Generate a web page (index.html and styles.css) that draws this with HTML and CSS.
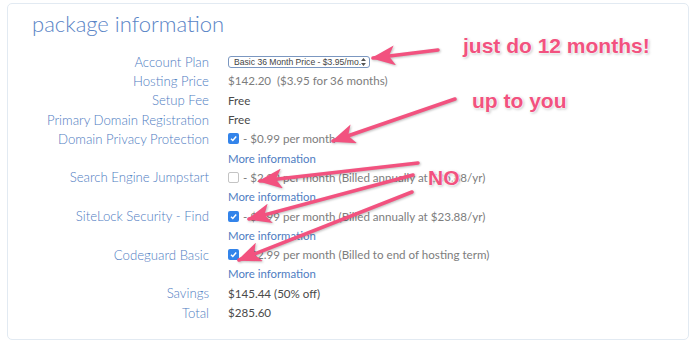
FILE: index.html
```html
<!DOCTYPE html>
<html lang="en">
<head>
    <meta charset="UTF-8">
    <meta name="viewport" content="width=device-width, initial-scale=1.0">
    <title>package information</title>
    <link rel="stylesheet" href="styles.css">
</head>
<body>

    <div class="card">
        <h1 class="title">package information</h1>

        <div class="details">
            <div class="label">Account Plan</div>
            <div class="value">
                <div class="plan-select">
                    <span>Basic 36 Month Price - $3.95/mo.</span>
                    <svg width="5" height="8" viewBox="0 0 5 8"><path d="M2.5 0 L5 3 L0 3 Z M2.5 8 L5 5 L0 5 Z" fill="#555"/></svg>
                </div>
            </div>

            <div class="label">Hosting Price</div>
            <div class="value">$142.20&nbsp; ($3.95 for 36 months)</div>

            <div class="label">Setup Fee</div>
            <div class="value strong">Free</div>

            <div class="label">Primary Domain Registration</div>
            <div class="value strong">Free</div>

            <!-- Add-ons -->
            <div class="label">Domain Privacy Protection</div>
            <div class="value"><span class="checkbox checked"></span> - $0.99 per month</div>
            <div></div>
            <div class="value link">More information</div>

            <div class="label">Search Engine Jumpstart</div>
            <div class="value"><span class="checkbox"></span> - $2.99 per month (Billed annually at $35.88/yr)</div>
            <div></div>
            <div class="value link">More information</div>

            <div class="label">SiteLock Security - Find</div>
            <div class="value"><span class="checkbox checked"></span> - $1.99 per month (Billed annually at $23.88/yr)</div>
            <div></div>
            <div class="value link">More information</div>

            <div class="label">Codeguard Basic</div>
            <div class="value"><span class="checkbox checked"></span> - $2.99 per month (Billed to end of hosting term)</div>
            <div></div>
            <div class="value link">More information</div>

            <div class="label">Savings</div>
            <div class="value strong">$145.44 (50% off)</div>

            <div class="label">Total</div>
            <div class="value strong">$285.60</div>
        </div>
    </div>

    <!-- Skitch style notes on top of the screenshot -->
    <svg class="arrows" width="700" height="350" viewBox="0 0 700 350">
        <defs>
            <marker id="head" markerUnits="userSpaceOnUse" markerWidth="24" markerHeight="20" viewBox="0 0 24 20" refX="22" refY="10" orient="auto">
                <path d="M0 0 L24 10 L0 20 L6 10 Z" fill="#f2527f"/>
            </marker>
        </defs>
        <g stroke="#f2527f" stroke-width="3.5" stroke-linecap="round" marker-end="url(#head)">
            <line x1="438" y1="50" x2="373" y2="58"/>
            <line x1="455" y1="99" x2="333" y2="141"/>
            <line x1="418" y1="163" x2="260" y2="181"/>
            <line x1="413" y1="175" x2="249" y2="219"/>
            <line x1="412" y1="192" x2="239" y2="260"/>
        </g>
    </svg>

    <div class="note note-months">just do 12 months!</div>
    <div class="note note-you">up to you</div>
    <div class="note note-no">NO</div>

</body>
</html>
```

FILE: styles.css
```css
body {
    margin: 0;
    padding: 0;
    background: #fff;
    position: relative;
    width: 700px;
    height: 350px;
    overflow: hidden;
    font-family: Lato, "Open Sans", sans-serif;
}

.card {
    box-sizing: border-box;
    margin: 3px 0 0 7px;
    width: 682px;
    height: 337px;
    border: 1px solid #e2eaf2;
    border-radius: 5px;
    padding: 7px 24px;
}

.title {
    margin: 0;
    font-size: 22px;
    line-height: 26px;
    font-weight: 300;
    color: #5a84c6;
}

.details {
    margin-top: 15px;
    display: grid;
    grid-template-columns: 177px 1fr;
    grid-auto-rows: 19.3px;
    column-gap: 19px;
    align-items: center;
}

.label {
    text-align: right;
    font-size: 13.2px;
    font-weight: 300;
    color: #4f7dc2;
    white-space: nowrap;
}

.value {
    font-size: 11.6px;
    color: #7d7d7d;
    white-space: nowrap;
    display: flex;
    align-items: center;
}

.value.strong {
    color: #4a4a4a;
}

.value.link {
    color: #4f7dc2;
    font-size: 11.4px;
}

.checkbox {
    display: inline-block;
    box-sizing: border-box;
    width: 11px;
    height: 11px;
    margin-right: 4px;
    border: 1px solid #c4c4c4;
    border-radius: 2px;
    background: #fff;
}

.checkbox.checked {
    border: none;
    background: #3384ea url("data:image/svg+xml,%3Csvg xmlns='http://www.w3.org/2000/svg' width='11' height='11'%3E%3Cpath d='M3 5.8 L4.8 7.5 L8.2 3.5' fill='none' stroke='white' stroke-width='1.5'/%3E%3C/svg%3E") no-repeat center;
}

/* Select box */
.plan-select {
    box-sizing: border-box;
    width: 142px;
    height: 12px;
    border: 1px solid #7b97c0;
    border-radius: 3px;
    display: flex;
    align-items: center;
    justify-content: space-between;
    padding: 0 3px 0 5px;
    font-family: "Liberation Sans", Arial, sans-serif;
    font-size: 8.6px;
    color: #444;
}

/* Notes */
.arrows {
    position: absolute;
    left: 0;
    top: 0;
    filter: drop-shadow(1px 1px 1px rgba(0, 0, 0, 0.25));
}

.note {
    position: absolute;
    font-family: "Liberation Sans", Arial, sans-serif;
    font-weight: bold;
    font-size: 21px;
    line-height: 21px;
    color: #f2527f;
    white-space: nowrap;
    text-shadow: 0 0 2px #fff, 0 0 2px #fff, 0 0 3px #fff, 1px 1px 3px rgba(0, 0, 0, 0.35);
}

.note-months {
    left: 463px;
    top: 35px;
}

.note-you {
    left: 472px;
    top: 90px;
}

.note-no {
    left: 428px;
    top: 167px;
}
```
